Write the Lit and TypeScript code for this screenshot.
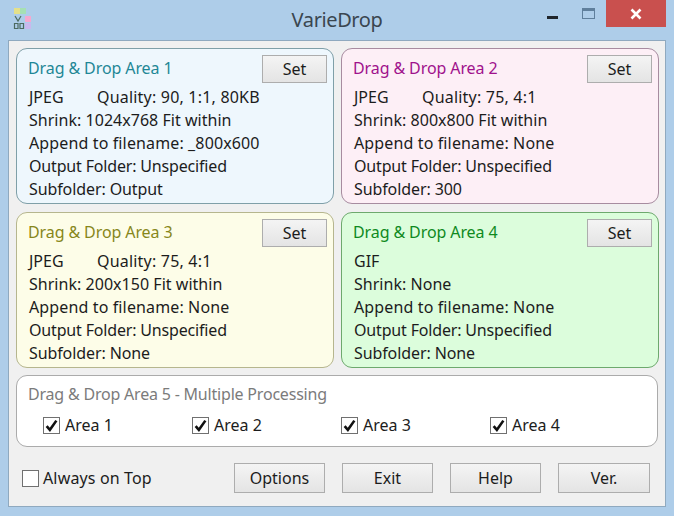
import { LitElement, html, css } from "lit";
import { customElement } from "lit/decorators.js";

const areas = [
  { cls: "a1", title: "Drag & Drop Area 1", fmt: "JPEG", q: "Quality: 90, 1:1, 80KB", lines: ["Shrink: 1024x768 Fit within", "Append to filename: _800x600", "Output Folder: Unspecified", "Subfolder: Output"] },
  { cls: "a2", title: "Drag & Drop Area 2", fmt: "JPEG", q: "Quality: 75, 4:1", lines: ["Shrink: 800x800 Fit within", "Append to filename: None", "Output Folder: Unspecified", "Subfolder: 300"] },
  { cls: "a3", title: "Drag & Drop Area 3", fmt: "JPEG", q: "Quality: 75, 4:1", lines: ["Shrink: 200x150 Fit within", "Append to filename: None", "Output Folder: Unspecified", "Subfolder: None"] },
  { cls: "a4", title: "Drag & Drop Area 4", fmt: "GIF", q: "", lines: ["Shrink: None", "Append to filename: None", "Output Folder: Unspecified", "Subfolder: None"] },
];

@customElement("app-root")
export class AppRoot extends LitElement {
  static styles = css`
    :host { display: block; width: 674px; height: 516px; overflow: hidden; background: #aecde9; font-family: "Noto Sans", sans-serif; font-size: 16px; color: #1c1c1c; }
    .titlebar { height: 40px; display: grid; grid-template-columns: 1fr auto 1fr; align-items: start; }
    .icon { margin: 7px 0 0 12px; display: block; }
    .title { font-size: 20px; line-height: 24px; margin-top: 8px; color: #3a4650; letter-spacing: -0.4px; }
    .controls { justify-self: end; display: flex; align-items: flex-start; margin-right: 8px; }
    .min { width: 11px; height: 3px; background: #20262c; margin: 16px 24px 0 0; }
    .max { width: 11px; height: 7px; border: 1.5px solid #5f7f9c; border-top-width: 3px; margin: 8px 11px 0 0; box-sizing: content-box; }
    .close { width: 60px; height: 27px; background: #c9504e; display: flex; align-items: center; justify-content: center; }
    .client { margin: 0 8px; height: 467px; box-sizing: border-box; background: #f0f0f0; border: 1px solid #8fa9bf; padding: 7px 7px 0; }
    .grid { display: grid; grid-template-columns: 318px 318px; column-gap: 7px; row-gap: 8px; }
    .panel { position: relative; height: 156px; box-sizing: border-box; border: 1px solid; border-radius: 11px; padding: 8px 12px 0 11px; line-height: 23px; }
    .a1 { background: #eef7fd; border-color: #7f9fa8; }
    .a2 { background: #fdeff6; border-color: #a78ca0; }
    .a3 { background: #fdfde8; border-color: #b6b68e; }
    .a4 { background: #dcfddc; border-color: #6ea96e; }
    .head { color: #1f8796; margin-bottom: 6px; height: 23px; letter-spacing: -0.1px; }
    .a2 .head { color: #a0128c; }
    .a3 .head { color: #87871a; }
    .a4 .head { color: #0f8a1e; }
    .line { padding-left: 1px; white-space: pre; }
    .line:nth-child(2) { letter-spacing: 0.2px; }
    .line:nth-child(3) { letter-spacing: 0.03px; }
    .line:nth-child(4) { letter-spacing: 0.13px; }
    .line:nth-child(5) { letter-spacing: -0.17px; }
    .line:nth-child(6) { letter-spacing: -0.1px; }
    .fmt { display: inline-block; width: 68px; letter-spacing: 0; }
    button { font: inherit; color: #1c1c1c; padding: 0; background: linear-gradient(#f4f4f4, #e4e4e4); border: 1px solid #adadad; }
    .set { position: absolute; top: 6px; right: 6px; width: 65px; height: 28px; }
    .multi { margin-top: 7px; height: 72px; box-sizing: border-box; background: #fff; border: 1px solid #ababab; border-radius: 11px; padding: 7px 12px 0 11px; line-height: 23px; }
    .multi .head { color: #7b7b7b; margin-bottom: 8px; letter-spacing: -0.2px; }
    .checks { display: grid; grid-template-columns: repeat(4, 149px); padding-left: 15px; }
    .check { display: flex; align-items: center; gap: 5px; }
    .box { width: 17px; height: 17px; box-sizing: border-box; border: 1px solid #707070; background: #fff; display: flex; align-items: center; justify-content: center; }
    .bottom { display: flex; align-items: center; margin-top: 16px; height: 30px; padding-left: 6px; }
    .always { display: flex; align-items: center; gap: 4px; width: 212px; letter-spacing: 0.15px; }
    .btns { display: flex; gap: 17px; }
    .btns button { width: 91px; height: 30px; }
    .btns button:last-child { width: 92px; }
  `;

  private tick() {
    return html`<svg width="13" height="13" viewBox="0 0 12 12"><path d="M1.5 6.5 L4.5 10 L10.5 1.5" fill="none" stroke="#111" stroke-width="2.4"/></svg>`;
  }

  render() {
    return html`
      <div class="titlebar">
        <svg class="icon" width="20" height="24" viewBox="0 0 20 24">
          <rect x="2" y="1" width="6" height="6" fill="#e4e08a"/>
          <rect x="8" y="1" width="6" height="6" fill="#a6e0b4"/>
          <rect x="13" y="9" width="6" height="6" fill="#f5a8d0"/>
          <rect x="13" y="16" width="6" height="6" fill="#c9b8ee"/>
          <path d="M3 9 L6 14 L9 9 M2.5 16.5h3.5v5H2.5z M8 16.5h3.5v5H8z" fill="none" stroke="#4d6a60" stroke-width="1.2"/>
        </svg>
        <div class="title">VarieDrop</div>
        <div class="controls">
          <div class="min"></div>
          <div class="max"></div>
          <div class="close"><svg width="12" height="12" viewBox="0 0 12 12"><path d="M1.5 1.5 L10.5 10.5 M10.5 1.5 L1.5 10.5" stroke="#fff" stroke-width="2.6"/></svg></div>
        </div>
      </div>
      <div class="client">
        <div class="grid">
          ${areas.map((a) => html`
            <div class="panel ${a.cls}">
              <div class="head">${a.title}</div>
              <div class="line"><span class="fmt">${a.fmt}</span>${a.q}</div>
              ${a.lines.map((l) => html`<div class="line">${l}</div>`)}
              <button class="set">Set</button>
            </div>`)}
        </div>
        <div class="multi">
          <div class="head">Drag &amp; Drop Area 5 - Multiple Processing</div>
          <div class="checks">
            ${[1, 2, 3, 4].map((n) => html`<div class="check"><span class="box">${this.tick()}</span>Area ${n}</div>`)}
          </div>
        </div>
        <div class="bottom">
          <div class="always"><span class="box"></span>Always on Top</div>
          <div class="btns">
            ${["Options", "Exit", "Help", "Ver."].map((b) => html`<button>${b}</button>`)}
          </div>
        </div>
      </div>
    `;
  }
}
